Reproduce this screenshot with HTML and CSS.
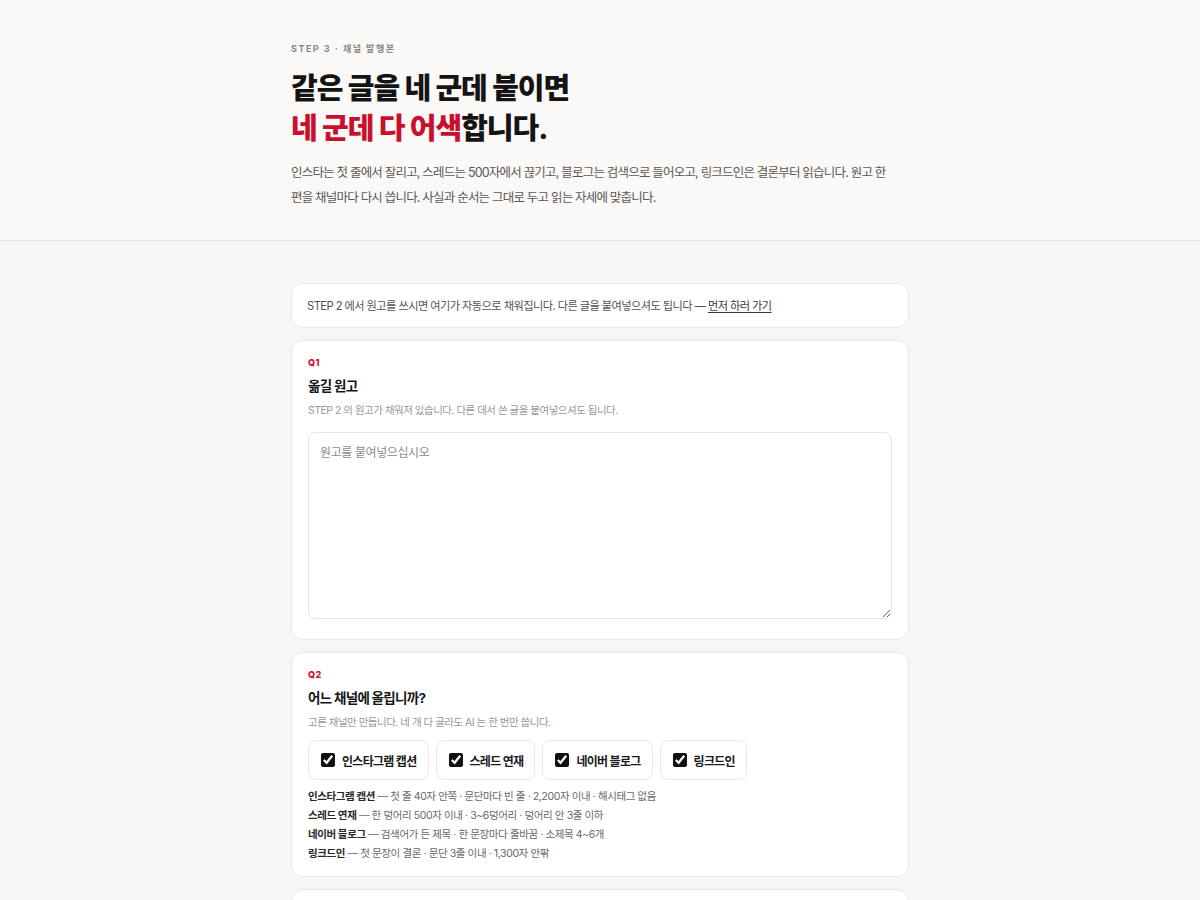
FILE: index.html
```html
<!DOCTYPE html>
<html lang="ko">
<head>
<meta charset="utf-8">
<title>STEP 3 · 채널 발행본</title>
<link rel="stylesheet" href="styles.css">
</head>
<body>
<header class="hero">
  <div class="wrap">
    <p class="eyebrow">STEP 3 · 채널 발행본</p>
    <h1 class="headline">같은 글을 네 군데 붙이면<br><span class="accent">네 군데 다 어색</span>합니다.</h1>
    <p class="lead">인스타는 첫 줄에서 잘리고, 스레드는 500자에서 끊기고, 블로그는 검색으로 들어오고, 링크드인은 결론부터 읽습니다. 원고 한 편을 채널마다 다시 씁니다. 사실과 순서는 그대로 두고 읽는 자세에 맞춥니다.</p>
  </div>
</header>
<main class="body">
  <div class="wrap stack">
    <div class="card notice">STEP 2 에서 원고를 쓰시면 여기가 자동으로 채워집니다. 다른 글을 붙여넣으셔도 됩니다 — <a href="#" class="link">먼저 하러 가기</a></div>

    <section class="card q q1">
      <div class="qnum">Q1</div>
      <h2 class="qtitle">옮길 원고</h2>
      <p class="qdesc">STEP 2 의 원고가 채워져 있습니다. 다른 데서 쓴 글을 붙여넣으셔도 됩니다.</p>
      <textarea class="draft" placeholder="원고를 붙여넣으십시오"></textarea>
    </section>

    <section class="card q q2">
      <div class="qnum">Q2</div>
      <h2 class="qtitle">어느 채널에 올립니까?</h2>
      <p class="qdesc">고른 채널만 만듭니다. 네 개 다 골라도 AI 는 한 번만 씁니다.</p>
      <div class="chips">
        <label class="chip"><input type="checkbox" checked><span>인스타그램 캡션</span></label>
        <label class="chip"><input type="checkbox" checked><span>스레드 연재</span></label>
        <label class="chip"><input type="checkbox" checked><span>네이버 블로그</span></label>
        <label class="chip"><input type="checkbox" checked><span>링크드인</span></label>
      </div>
      <ul class="rules">
        <li><b>인스타그램 캡션</b> — 첫 줄 40자 안쪽 · 문단마다 빈 줄 · 2,200자 이내 · 해시태그 없음</li>
        <li><b>스레드 연재</b> — 한 덩어리 500자 이내 · 3~6덩어리 · 덩어리 안 3줄 이하</li>
        <li><b>네이버 블로그</b> — 검색어가 든 제목 · 한 문장마다 줄바꿈 · 소제목 4~6개</li>
        <li><b>링크드인</b> — 첫 문장이 결론 · 문단 3줄 이내 · 1,300자 안팎</li>
      </ul>
    </section>

    <section class="card q tail"></section>
  </div>
</main>
</body>
</html>
```

FILE: styles.css
```css
* { box-sizing: border-box; }
html, body { margin: 0; padding: 0; }
body {
  font-family: Inter, "Noto Sans CJK KR", sans-serif;
  background: #f7f6f4;
  color: #1a1a1a;
  word-break: keep-all;
}
.wrap {
  width: 618px;
  margin: 0 auto;
}
.hero {
  background: #faf9f8;
  border-bottom: 1px solid #e9e6e2;
  padding: 42px 0 30px;
}
.eyebrow {
  margin: 0;
  font-size: 9px;
  line-height: 14px;
  font-weight: 700;
  letter-spacing: 1.5px;
  color: #8a8784;
}
.headline {
  margin: 13px 0 0;
  font-size: 29px;
  line-height: 40px;
  font-weight: 800;
  letter-spacing: -1px;
  color: #141414;
}
.accent { color: #c8102e; }
.lead {
  margin: 11px 0 0;
  max-width: 600px;
  font-size: 12.5px;
  line-height: 25px;
  color: #5a5754;
  letter-spacing: -0.8px;
}
.body {
  padding: 42px 0 40px;
}
.stack {
  display: flex;
  flex-direction: column;
  gap: 12px;
}
.card {
  background: #ffffff;
  border: 1px solid #ebe8e4;
  border-radius: 12px;
}
.notice {
  padding: 14px 15px 13px;
  font-size: 11.2px;
  line-height: 16px;
  color: #55524f;
  letter-spacing: -0.55px;
}
.link {
  color: #3a3836;
  text-decoration: underline;
  text-underline-offset: 2px;
}
.q {
  padding: 15px 16px 20px;
}
.q1 { padding-bottom: 20px; }
.qnum {
  font-size: 9px;
  line-height: 14px;
  font-weight: 800;
  color: #c8102e;
  letter-spacing: 0.5px;
}
.qtitle {
  margin: 6px 0 0;
  font-size: 13.5px;
  line-height: 20px;
  font-weight: 700;
  color: #141414;
  letter-spacing: -0.7px;
}
.qdesc {
  margin: 7px 0 0;
  font-size: 10.5px;
  line-height: 16px;
  color: #9a9794;
  letter-spacing: -0.5px;
}
.draft {
  display: block;
  width: 100%;
  height: 187px;
  margin-top: 13px;
  padding: 11px 11px;
  border: 1px solid #e6e3df;
  border-radius: 8px;
  background: #ffffff;
  font-family: inherit;
  font-size: 12px;
  line-height: 18px;
  color: #333;
  letter-spacing: -0.4px;
  resize: vertical;
  outline: none;
}
.draft::placeholder { color: #8e8b88; }
.chips {
  display: flex;
  gap: 7px;
  margin-top: 9px;
}
.chip {
  display: flex;
  align-items: center;
  gap: 7px;
  height: 40px;
  padding: 0 11px 0 12px;
  border: 1px solid #ebe8e4;
  border-radius: 8px;
  font-size: 12px;
  font-weight: 700;
  color: #1a1a1a;
  letter-spacing: -0.7px;
}
.chip input {
  margin: 0;
  width: 14px;
  height: 14px;
  accent-color: #111111;
}
.rules {
  list-style: none;
  margin: 7px 0 0;
  padding: 0;
  font-size: 10.5px;
  line-height: 19px;
  color: #6a6764;
  letter-spacing: -0.4px;
}
.rules b {
  color: #2a2826;
  font-weight: 700;
}
.q2 { padding-bottom: 13px; }
.tail { height: 60px; padding: 0; }
```
